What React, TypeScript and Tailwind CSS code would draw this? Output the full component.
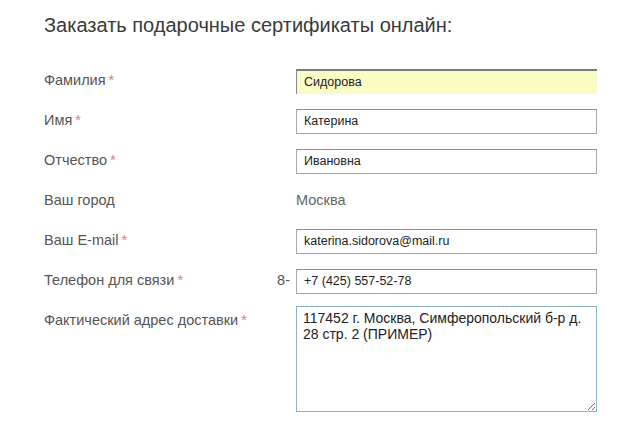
import React from "react";

const Star = () => <span className="ml-[3px] text-[#d98080]">*</span>;

const inputCls =
  "h-[25px] w-[301px] border border-[#a9a9a9] border-t-[#8e8e8e] bg-white px-[7px] text-[12.5px] text-[#222] outline-none";

function Row({
  label,
  required,
  prefix,
  children,
}: {
  label: string;
  required?: boolean;
  prefix?: string;
  children: React.ReactNode;
}) {
  return (
    <div className="flex h-[40px] items-center">
      <div className="flex w-[252px] items-center pr-[6px]">
        <span>
          {label}
          {required && <Star />}
        </span>
        {prefix && <span className="ml-auto">{prefix}</span>}
      </div>
      {children}
    </div>
  );
}

export default function App() {
  return (
    <div
      className="h-[433px] w-[640px] overflow-hidden bg-white pl-[44px] pt-[15px] text-[14.5px] text-[#555]"
      style={{ fontFamily: '"Liberation Sans", Arial, sans-serif' }}
    >
      <h1 className="mb-[26px] text-[20px] leading-[20px] text-[#3a3a3a]">
        Заказать подарочные сертификаты онлайн:
      </h1>
      <Row label="Фамилия" required>
        <input
          readOnly
          value="Сидорова"
          className="h-[25px] w-[301px] border-t-2 border-l-[1.5px] border-t-[#7a7a7a] border-l-[#8a8a8a] bg-[#fbfbc6] px-[7px] text-[12.5px] text-[#222] outline-none"
        />
      </Row>
      <Row label="Имя" required>
        <input readOnly value="Катерина" className={inputCls} />
      </Row>
      <Row label="Отчество" required>
        <input readOnly value="Ивановна" className={inputCls} />
      </Row>
      <Row label="Ваш город">
        <span className="text-[#666]">Москва</span>
      </Row>
      <Row label="Ваш E-mail" required>
        <input readOnly value="katerina.sidorova@mail.ru" className={inputCls} />
      </Row>
      <Row label="Телефон для связи" required prefix="8-">
        <input readOnly value="+7 (425) 557-52-78" className={inputCls} />
      </Row>
      <div className="flex items-start pt-[5px]">
        <div className="w-[252px] pt-[4px]">
          Фактический адрес доставки
          <Star />
        </div>
        <textarea
          readOnly
          value="117452 г. Москва, Симферопольский б-р д. 28 стр. 2 (ПРИМЕР)"
          className="h-[106px] w-[301px] resize border border-[#8fb1c6] bg-white px-[6px] py-[3px] text-[14px] leading-[16px] text-[#222] outline-none"
        />
      </div>
    </div>
  );
}
